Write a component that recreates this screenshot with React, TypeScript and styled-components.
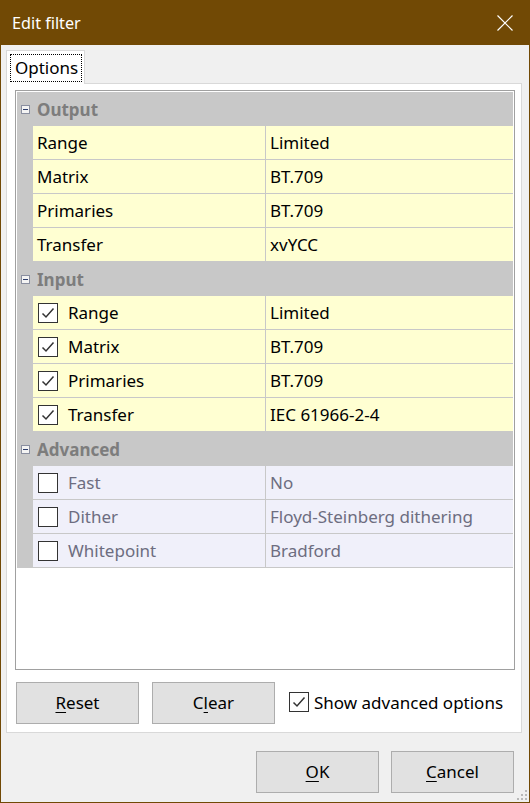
import React from 'react';
import styled, { createGlobalStyle } from 'styled-components';

const color = {
  frame: '#714905',
  face: '#f0f0f0',
  tabBorder: '#d9d9d9',
  gridBorder: '#a0a0a0',
  gutter: '#c8c8c8',
  line: '#c8c8c8',
  yellow: '#ffffd2',
  lavender: '#f0f0fa',
  headerText: '#7d7d7d',
  disabledText: '#6d6d80',
  text: '#000000',
  button: '#e1e1e1',
  buttonBorder: '#adadad',
};

const font = `'Noto Sans', 'Open Sans', sans-serif`;

const GlobalStyle = createGlobalStyle`
  html, body {
    margin: 0;
    padding: 0;
    background: #ffffff;
  }
  body {
    font-family: ${font};
  }
`;

const Window = styled.div`
  display: flex;
  flex-direction: column;
  width: 530px;
  height: 803px;
  box-sizing: border-box;
  border: 1px solid ${color.frame};
  border-top: none;
  background-color: ${color.face};
  font-family: ${font};
  font-size: 17px;
  color: ${color.text};
`;

const TitleBar = styled.div`
  display: flex;
  align-items: center;
  justify-content: space-between;
  height: 45px;
  flex-shrink: 0;
  margin: 0 -1px;
  padding: 0 17px 0 12px;
  background-color: ${color.frame};
  color: #ffffff;
  font-size: 16.2px;
`;

const Body = styled.div`
  display: flex;
  flex: 1;
  flex-direction: column;
  min-height: 0;
  padding: 5px 7px 9px 5px;
  position: relative;
`;

const TabStrip = styled.div`
  display: flex;
  height: 33px;
  flex-shrink: 0;
`;

const Tab = styled.div`
  display: flex;
  align-items: center;
  justify-content: center;
  width: 79px;
  box-sizing: border-box;
  border: 1px solid ${color.tabBorder};
  border-bottom: none;
  background-color: #ffffff;
  padding: 3px 2px 2px 3px;
  margin-bottom: -1px;
  position: relative;
  z-index: 1;
`;

const FocusRect = styled.div`
  flex: 1;
  height: 100%;
  box-sizing: border-box;
  border: 1px dotted #000000;
  display: flex;
  align-items: center;
  padding: 0 0 2px 4px;
`;

const Panel = styled.div`
  display: flex;
  flex: 1;
  flex-direction: column;
  min-height: 0;
  border: 1px solid ${color.tabBorder};
  background-color: #ffffff;
  padding: 6px 6px 8px 8px;
`;

const Grid = styled.div`
  flex: 1;
  border: 1px solid ${color.gridBorder};
  padding: 1px;
  background-color: #ffffff;
`;

const CategoryRow = styled.div`
  display: flex;
  align-items: center;
  height: 34px;
  background-color: ${color.gutter};
  font-weight: bold;
  color: ${color.headerText};
`;

const Expander = styled.div`
  width: 9px;
  height: 9px;
  box-sizing: border-box;
  border: 1px solid #8a8fa0;
  background-color: #f4f4f4;
  margin: 0 7px 0 4px;
  display: flex;
  align-items: center;
  justify-content: center;

  &::after {
    content: '';
    width: 5px;
    height: 1px;
    background-color: #2c3c6c;
  }
`;

type RowProps = {
  disabled?: boolean;
};

const Row = styled.div`
  display: flex;
  height: 34px;
  background-color: ${color.gutter};
`;

const Cell = styled.div<RowProps>`
  display: flex;
  align-items: center;
  box-sizing: border-box;
  height: 34px;
  padding-bottom: 1px;
  border-bottom: 1px solid ${color.line};
  background-color: ${(p) => (p.disabled ? color.lavender : color.yellow)};
  color: ${(p) => (p.disabled ? color.disabledText : color.text)};
  white-space: nowrap;
`;

const Gutter = styled.div`
  width: 16px;
  flex-shrink: 0;
`;

const NameCell = styled(Cell)`
  width: 233px;
  flex-shrink: 0;
  padding-left: 4px;
  border-right: 1px solid ${color.line};
`;

const ValueCell = styled(Cell)`
  flex: 1;
  padding-left: 4px;
`;

const CheckBox = styled.div`
  width: 20px;
  height: 20px;
  box-sizing: border-box;
  border: 1px solid #333333;
  background-color: #ffffff;
  display: flex;
  align-items: center;
  justify-content: center;
  flex-shrink: 0;
`;

const NameCheck = styled(CheckBox)`
  margin: 1px 10px 0 1px;
`;

const ButtonRow = styled.div`
  display: flex;
  align-items: center;
  margin-top: 12px;
  padding-left: 1px;
  gap: 13px;
`;

const Button = styled.button`
  width: 123px;
  height: 42px;
  box-sizing: border-box;
  border: 1px solid ${color.buttonBorder};
  background-color: ${color.button};
  font-family: ${font};
  font-size: 17px;
  color: ${color.text};
  padding: 0 0 2px;
  u {
    text-decoration-thickness: 1px;
    text-underline-offset: 3px;
  }
`;

const CheckLabel = styled.label`
  display: flex;
  align-items: center;
  gap: 5px;
  margin-left: 1px;
  padding-bottom: 2px;
  white-space: nowrap;
`;

const Footer = styled.div`
  display: flex;
  justify-content: flex-end;
  gap: 12px;
  margin-top: 18px;
  padding-right: 8px;
`;

const Grip = styled.svg`
  position: absolute;
  right: 1px;
  bottom: 1px;
`;

const Check = () => (
  <svg width='16' height='16' viewBox='0 0 16 16'>
    <polyline
      points='2.5,8.5 6,12 13.5,3.5'
      fill='none'
      stroke='#333333'
      strokeWidth='1.5'
    />
  </svg>
);

type Prop = {
  name: string;
  value: string;
  check?: boolean;
};

type Category = {
  title: string;
  checkable?: boolean;
  disabled?: boolean;
  props: Prop[];
};

const categories: Category[] = [
  {
    title: 'Output',
    props: [
      { name: 'Range', value: 'Limited' },
      { name: 'Matrix', value: 'BT.709' },
      { name: 'Primaries', value: 'BT.709' },
      { name: 'Transfer', value: 'xvYCC' },
    ],
  },
  {
    title: 'Input',
    checkable: true,
    props: [
      { name: 'Range', value: 'Limited', check: true },
      { name: 'Matrix', value: 'BT.709', check: true },
      { name: 'Primaries', value: 'BT.709', check: true },
      { name: 'Transfer', value: 'IEC 61966-2-4', check: true },
    ],
  },
  {
    title: 'Advanced',
    checkable: true,
    disabled: true,
    props: [
      { name: 'Fast', value: 'No' },
      { name: 'Dither', value: 'Floyd-Steinberg dithering' },
      { name: 'Whitepoint', value: 'Bradford' },
    ],
  },
];

const gripDots = [
  [9, 1],
  [5, 5],
  [9, 5],
  [1, 9],
  [5, 9],
  [9, 9],
];

const App: React.FC = () => {
  return (
    <>
      <GlobalStyle />
      <Window>
        <TitleBar>
          <span>Edit filter</span>
          <svg width='16' height='16' viewBox='0 0 16 16'>
            <path d='M0.5,0.5 L15.5,15.5 M15.5,0.5 L0.5,15.5' stroke='#ffffff' strokeWidth='1.2' />
          </svg>
        </TitleBar>
        <Body>
          <TabStrip>
            <Tab>
              <FocusRect>Options</FocusRect>
            </Tab>
          </TabStrip>
          <Panel>
            <Grid>
              {categories.map((cat) => (
                <React.Fragment key={cat.title}>
                  <CategoryRow>
                    <Expander />
                    {cat.title}
                  </CategoryRow>
                  {cat.props.map((p) => (
                    <Row key={p.name}>
                      <Gutter />
                      <NameCell disabled={cat.disabled}>
                        {cat.checkable && (
                          <NameCheck>{p.check && <Check />}</NameCheck>
                        )}
                        {p.name}
                      </NameCell>
                      <ValueCell disabled={cat.disabled}>{p.value}</ValueCell>
                    </Row>
                  ))}
                </React.Fragment>
              ))}
            </Grid>
            <ButtonRow>
              <Button>
                <u>R</u>eset
              </Button>
              <Button>
                C<u>l</u>ear
              </Button>
              <CheckLabel>
                <CheckBox>
                  <Check />
                </CheckBox>
                Show advanced options
              </CheckLabel>
            </ButtonRow>
          </Panel>
          <Footer>
            <Button>
              <u>O</u>K
            </Button>
            <Button>
              <u>C</u>ancel
            </Button>
          </Footer>
          <Grip width='12' height='12' viewBox='0 0 12 12'>
            {gripDots.map(([x, y]) => (
              <rect key={`${x}-${y}`} x={x} y={y} width='2' height='2' fill='#b8b8b8' />
            ))}
          </Grip>
        </Body>
      </Window>
    </>
  );
};

export default App;
